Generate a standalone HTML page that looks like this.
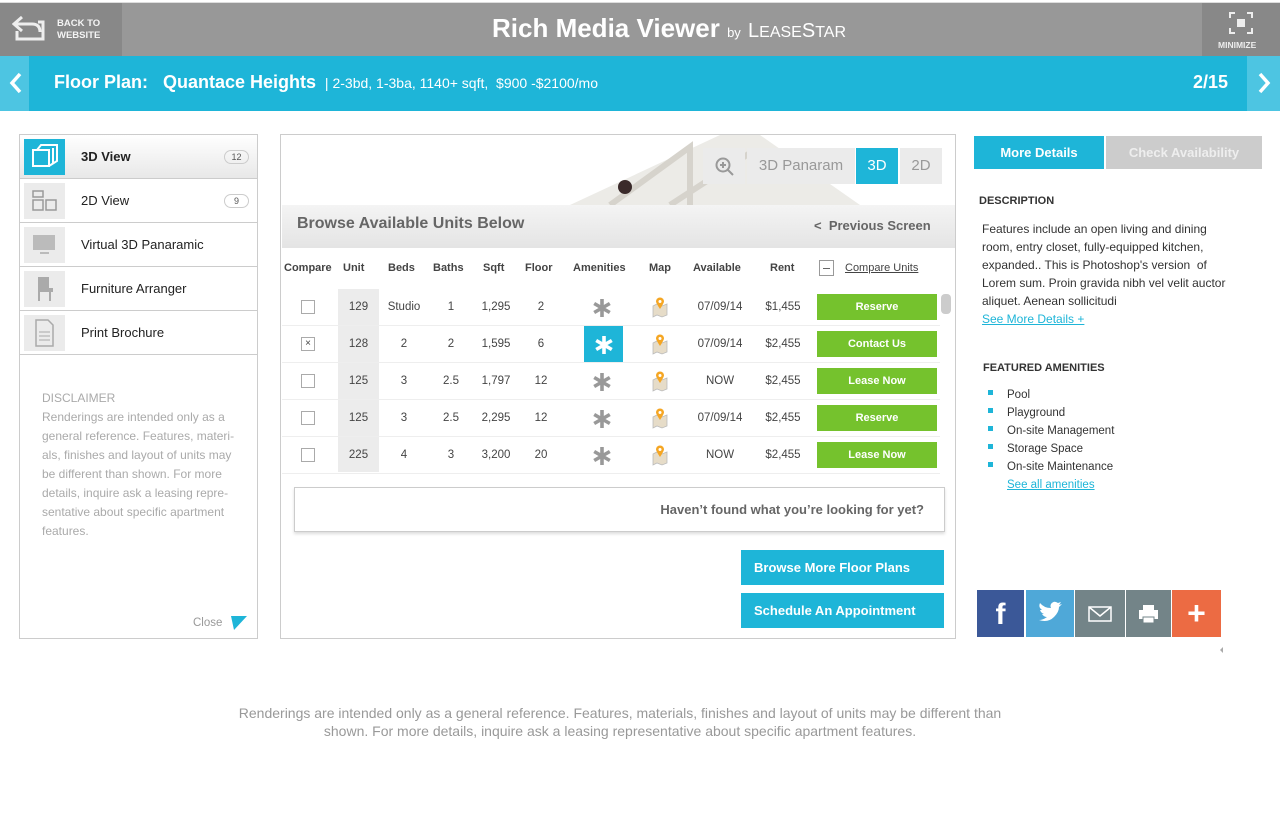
<!DOCTYPE html>
<html><head><meta charset="utf-8"><style>
*{box-sizing:border-box;margin:0;padding:0}
body{width:1280px;height:816px;background:#fff;font-family:"Liberation Sans",sans-serif;position:relative;overflow:hidden;color:#333}
.a{position:absolute}
.top{left:0;top:2px;width:1280px;height:54px;background:#989898;border-top:1px solid #ddd}
.nav{left:0;top:56px;width:1280px;height:55px;background:#1eb5d8}
.side{left:19px;top:134px;width:239px;height:505px;border:1px solid #ccc}
.item{position:absolute;left:0;width:237px;height:44px;border-bottom:1px solid #ccc;font-size:13px;color:#222}
.item .ic{position:absolute;left:4px;top:4px;width:41px;height:36px;background:#ebebeb}
.item span{position:absolute;left:61px;top:14px}
.badge{position:absolute;right:8px;top:15px;width:25px;height:14px;border:1px solid #ccc;border-radius:8px;font-size:9px;text-align:center;line-height:12px;color:#555}
.main{left:280px;top:134px;width:676px;height:505px;border:1px solid #ccc}
.th{position:absolute;top:262px;font-size:11px;font-weight:bold;color:#444;text-align:center}
.row{position:absolute;left:282px;width:658px;height:37px;border-bottom:1px solid #eee;font-size:11.5px;color:#444}
.row div{position:absolute;top:0;height:36px;line-height:36px;text-align:center}
.row .btn{left:535px;top:5px;width:120px;height:26px;line-height:26px;background:#75c22d;color:#fff;font-weight:bold;font-size:11px}
.row .cb{left:19px;top:11px;width:14px;height:14px;line-height:11px;border:1px solid #aaa;background:#fff;font-size:10px}
.row .st{left:282px;width:76px;padding-top:8px}
.row .mp{left:358px;width:42px;padding-top:8px}
.sbtn{background:#1eb5d8;color:#fff;font-weight:bold;font-size:13px;height:35px;line-height:35px;padding-left:13px}
.am{font-size:11.5px;color:#333;left:1007px}
.sq{position:absolute;left:988px;width:5px;height:5px;background:#1eb5d8}
</style></head><body>
<svg width="0" height="0" style="position:absolute"><defs>
<g id="ast"><path d="M10 1V19M2.2 5.5L17.8 14.5M2.2 14.5L17.8 5.5" stroke-width="3.6" stroke-linecap="butt"/></g>
<g id="pin"><path d="M2 9L6 7L11 9L16 7V18L11 20L6 18L2 20Z" fill="#e6dcc8" stroke="#bbb" stroke-width="0.8"/><path d="M9 12Q5 6 5 4.5A4 4 0 0 1 13 4.5Q13 6 9 12Z" fill="#f5a623"/><circle cx="9" cy="4.5" r="1.5" fill="#fff"/></g>
</defs></svg>
<div class="a top"></div>
<div class="a" style="left:0;top:3px;width:122px;height:53px;background:#888"></div>
<svg class="a" style="left:12px;top:14px" width="34" height="28" viewBox="0 0 34 28"><path d="M10 3 L2 10 L10 17 M2 10 H20 Q28 10 28 18" fill="none" stroke="#eee" stroke-width="3"/><path d="M5 17 V25 H31 V8 H26" fill="none" stroke="#eee" stroke-width="3"/></svg>
<div class="a" style="left:57px;top:18px;font-size:9.5px;font-weight:bold;color:#f4f4f4;line-height:12px">BACK TO<br>WEBSITE</div>
<div class="a" style="left:492px;top:13px;font-size:26px;font-weight:bold;color:#fff">Rich Media Viewer <span style="font-size:13px;font-weight:normal">by</span> <span style="font-size:20px;font-weight:normal">L<span style="font-size:16px">EASE</span>S<span style="font-size:16px">TAR</span></span></div>
<div class="a" style="left:1202px;top:3px;width:78px;height:53px;background:#888"></div>
<svg class="a" style="left:1229px;top:12px" width="24" height="22"><path d="M1 6V1H6 M18 1H23V6 M23 16V21H18 M6 21H1V16" fill="none" stroke="#eee" stroke-width="2"/><rect x="8" y="7" width="8" height="8" fill="#eee"/></svg>
<div class="a" style="left:1218px;top:40px;font-size:8.5px;font-weight:bold;color:#eee">MINIMIZE</div>
<div class="a nav"></div>
<div class="a" style="left:0;top:56px;width:29px;height:55px;background:#4dc5e2"></div>
<div class="a" style="left:1247px;top:56px;width:33px;height:55px;background:#4dc5e2"></div>
<svg class="a" style="left:8px;top:72px" width="16" height="22"><path d="M12 2L4 11L12 20" fill="none" stroke="#fff" stroke-width="3.5"/></svg>
<svg class="a" style="left:1256px;top:72px" width="16" height="22"><path d="M4 2L12 11L4 20" fill="none" stroke="#fff" stroke-width="3.5"/></svg>
<div class="a" style="left:54px;top:72px;color:#fff;font-size:18px;font-weight:bold">Floor Plan:&nbsp;&nbsp; Quantace Heights <span style="font-size:14px;font-weight:normal">&nbsp;| 2-3bd, 1-3ba, 1140+ sqft,&nbsp; $900 -$2100/mo</span></div>
<div class="a" style="left:1193px;top:72px;color:#fff;font-size:18px;font-weight:bold">2/15</div>

<div class="a side">
 <div class="item" style="top:0;background:linear-gradient(#fff,#e8e8e8)"><div class="ic" style="background:#1eb5d8"><svg width="41" height="36"><rect x="9" y="11" width="16" height="16" fill="none" stroke="#fff" stroke-width="2"/><path d="M13 11L17 6H33V22L25 27M29 9V25" fill="none" stroke="#fff" stroke-width="2"/></svg></div><span style="font-weight:bold">3D View</span><div class="badge">12</div></div>
 <div class="item" style="top:44px"><div class="ic"><svg width="41" height="36"><g fill="none" stroke="#999" stroke-width="1.5"><rect x="9" y="8" width="10" height="6"/><rect x="9" y="17" width="10" height="10"/><rect x="22" y="17" width="10" height="10"/></g></svg></div><span>2D View</span><div class="badge">9</div></div>
 <div class="item" style="top:88px"><div class="ic"><svg width="41" height="36"><rect x="9" y="8" width="22" height="15" fill="#bbb"/><rect x="16" y="25" width="9" height="2" fill="#bbb"/></svg></div><span>Virtual 3D Panaramic</span></div>
 <div class="item" style="top:132px"><div class="ic"><svg width="41" height="36"><path d="M13 6H25V17H29V21H27V30H25V21H16V30H14V6Z" fill="#aaa"/></svg></div><span>Furniture Arranger</span></div>
 <div class="item" style="top:176px"><div class="ic"><svg width="41" height="36"><path d="M12 5H24L29 10V31H12Z" fill="none" stroke="#aaa" stroke-width="1.5"/><path d="M15 17H26M15 21H26M15 25H26" stroke="#aaa"/></svg></div><span>Print Brochure</span></div>
 <div class="a" style="left:22px;top:254px;font-size:12px;color:#aaa;line-height:19px;width:205px">DISCLAIMER<br>Renderings are intended only as a general reference. Features, materi-als, finishes and layout of units may be different than shown. For more details, inquire ask a leasing repre-sentative about specific apartment features.</div>
 <div class="a" style="left:173px;top:482px;font-size:11.5px;color:#999">Close</div>
 <svg class="a" style="left:211px;top:481px" width="16" height="14"><path d="M0 0H16L3 14Z" fill="#1eb5d8"/></svg>
</div>

<div class="a main"></div>
<svg class="a" style="left:520px;top:135px" width="340" height="70"><path d="M50 70L200 0H240L340 70Z" fill="#ecebe7"/><path d="M90 70L170 12V70M150 70L230 18" stroke="#d6d3cc" stroke-width="6" fill="none"/><circle cx="105" cy="52" r="7" fill="#3a2a2a"/></svg>
<div class="a" style="left:703px;top:148px;width:42px;height:36px;background:#ebebeb"></div>
<svg class="a" style="left:714px;top:156px" width="22" height="22"><circle cx="9" cy="9" r="6.5" fill="none" stroke="#999" stroke-width="2"/><path d="M14 14L19 19M6 9H12M9 6V12" stroke="#999" stroke-width="2"/></svg>
<div class="a" style="left:747px;top:148px;width:108px;height:36px;background:#ebebeb;color:#999;font-size:15px;line-height:36px;text-align:center">3D Panaram</div>
<div class="a" style="left:856px;top:148px;width:42px;height:36px;background:#1eb5d8;color:#fff;font-size:15px;line-height:36px;text-align:center">3D</div>
<div class="a" style="left:900px;top:148px;width:42px;height:36px;background:#ebebeb;color:#999;font-size:15px;line-height:36px;text-align:center">2D</div>
<div class="a" style="left:282px;top:205px;width:673px;height:43px;background:linear-gradient(#f4f4f4,#e4e4e4)"></div>
<div class="a" style="left:297px;top:215px;font-size:16px;font-weight:bold;color:#666">Browse Available Units Below</div>
<div class="a" style="left:814px;top:218px;font-size:13px;font-weight:bold;color:#666">&lt;&nbsp; Previous Screen</div>
<div class="th" style="left:284px">Compare</div><div class="th" style="left:343px">Unit</div><div class="th" style="left:388px">Beds</div><div class="th" style="left:433px">Baths</div><div class="th" style="left:483px">Sqft</div><div class="th" style="left:525px">Floor</div><div class="th" style="left:573px">Amenities</div><div class="th" style="left:649px">Map</div><div class="th" style="left:693px">Available</div><div class="th" style="left:770px">Rent</div>
<div class="a" style="left:819px;top:260px;width:15px;height:16px;border:1px solid #999"><div style="margin:7px 3px;height:1px;background:#666"></div></div>
<div class="a" style="left:845px;top:262px;font-size:11px;color:#444;text-decoration:underline">Compare Units</div>
<div class="a" style="left:338px;top:289px;width:41px;height:183px;background:#ececec"></div>
<div class="a" style="left:941px;top:294px;width:10px;height:20px;background:#ccc;border-radius:4px"></div>

<div class="row" style="top:289px"><div class="cb"></div><div style="left:56px;width:41px">129</div><div style="left:98px;width:48px">Studio</div><div style="left:146px;width:46px">1</div><div style="left:192px;width:44px">1,295</div><div style="left:236px;width:46px">2</div><div class="st"><svg width="20" height="20" stroke="#999"><use href="#ast"/></svg></div><div class="mp"><svg width="20" height="22"><use href="#pin"/></svg></div><div style="left:400px;width:76px">07/09/14</div><div style="left:476px;width:50px">$1,455</div><div class="btn">Reserve</div></div>
<div class="row" style="top:326px"><div class="cb">×</div><div style="left:56px;width:41px">128</div><div style="left:98px;width:48px">2</div><div style="left:146px;width:46px">2</div><div style="left:192px;width:44px">1,595</div><div style="left:236px;width:46px">6</div><div class="st" style="left:302px;width:39px;background:#1eb5d8"><svg width="20" height="20" stroke="#fff"><use href="#ast"/></svg></div><div class="mp"><svg width="20" height="22"><use href="#pin"/></svg></div><div style="left:400px;width:76px">07/09/14</div><div style="left:476px;width:50px">$2,455</div><div class="btn">Contact Us</div></div>
<div class="row" style="top:363px"><div class="cb"></div><div style="left:56px;width:41px">125</div><div style="left:98px;width:48px">3</div><div style="left:146px;width:46px">2.5</div><div style="left:192px;width:44px">1,797</div><div style="left:236px;width:46px">12</div><div class="st"><svg width="20" height="20" stroke="#999"><use href="#ast"/></svg></div><div class="mp"><svg width="20" height="22"><use href="#pin"/></svg></div><div style="left:400px;width:76px">NOW</div><div style="left:476px;width:50px">$2,455</div><div class="btn">Lease Now</div></div>
<div class="row" style="top:400px"><div class="cb"></div><div style="left:56px;width:41px">125</div><div style="left:98px;width:48px">3</div><div style="left:146px;width:46px">2.5</div><div style="left:192px;width:44px">2,295</div><div style="left:236px;width:46px">12</div><div class="st"><svg width="20" height="20" stroke="#999"><use href="#ast"/></svg></div><div class="mp"><svg width="20" height="22"><use href="#pin"/></svg></div><div style="left:400px;width:76px">07/09/14</div><div style="left:476px;width:50px">$2,455</div><div class="btn">Reserve</div></div>
<div class="row" style="top:437px"><div class="cb"></div><div style="left:56px;width:41px">225</div><div style="left:98px;width:48px">4</div><div style="left:146px;width:46px">3</div><div style="left:192px;width:44px">3,200</div><div style="left:236px;width:46px">20</div><div class="st"><svg width="20" height="20" stroke="#999"><use href="#ast"/></svg></div><div class="mp"><svg width="20" height="22"><use href="#pin"/></svg></div><div style="left:400px;width:76px">NOW</div><div style="left:476px;width:50px">$2,455</div><div class="btn">Lease Now</div></div>

<div class="a" style="left:294px;top:487px;width:651px;height:45px;border:1px solid #ccc;box-shadow:0 2px 3px #ddd;text-align:right;padding-right:20px;line-height:43px;font-size:13px;font-weight:bold;color:#666">Haven’t found what you’re looking for yet?</div>
<div class="a sbtn" style="left:741px;top:550px;width:203px">Browse More Floor Plans</div>
<div class="a sbtn" style="left:741px;top:593px;width:203px">Schedule An Appointment</div>

<div class="a" style="left:974px;top:136px;width:130px;height:33px;background:#1eb5d8;color:#fff;font-weight:bold;font-size:13px;text-align:center;line-height:33px">More Details</div>
<div class="a" style="left:1106px;top:136px;width:156px;height:33px;background:#ccc;color:#eee;font-weight:bold;font-size:13px;text-align:center;line-height:33px">Check Availability</div>
<div class="a" style="left:979px;top:195px;font-size:11px;font-weight:bold;color:#333">DESCRIPTION</div>
<div class="a" style="left:982px;top:220px;width:250px;font-size:12px;line-height:18px;color:#333">Features include an open living and dining room, entry closet, fully-equipped kitchen, expanded.. This is Photoshop's version&nbsp; of Lorem sum. Proin gravida nibh vel velit auctor aliquet. Aenean sollicitudi<br><span style="color:#1eb5d8;text-decoration:underline">See More Details +</span></div>
<div class="a" style="left:983px;top:362px;font-size:11px;font-weight:bold;color:#333">FEATURED AMENITIES</div>
<div class="sq" style="top:390px"></div><div class="sq" style="top:408px"></div><div class="sq" style="top:426px"></div><div class="sq" style="top:444px"></div><div class="sq" style="top:462px"></div>
<div class="a am" style="top:386px;line-height:18px">Pool<br>Playground<br>On-site Management<br>Storage Space<br>On-site Maintenance<br><span style="color:#1eb5d8;text-decoration:underline">See all amenities</span></div>

<div class="a" style="left:977px;top:590px;width:47px;height:47px;background:#3b5898;color:#fff;font-size:30px;font-weight:bold;text-align:center;line-height:50px">f</div>
<div class="a" style="left:1026px;top:590px;width:48px;height:47px;background:#4fa8d8"><svg width="48" height="47"><path d="M13 30Q22 33 28 27Q33 22 33 17L36 14L33 15L35 12L32 13Q28 10 25 14Q24 16 25 18Q18 18 14 13Q12 17 16 20L14 20Q15 23 18 24L16 24Q18 27 21 27Q17 30 13 30Z" fill="#fff"/></svg></div>
<div class="a" style="left:1075px;top:590px;width:50px;height:47px;background:#738488"><svg width="50" height="47"><rect x="14" y="17" width="22" height="14" fill="none" stroke="#fff" stroke-width="1.5"/><path d="M14 17L25 26L36 17" fill="none" stroke="#fff" stroke-width="1.5"/></svg></div>
<div class="a" style="left:1126px;top:590px;width:45px;height:47px;background:#738488"><svg width="45" height="47"><rect x="17" y="15" width="11" height="5" fill="#fff"/><rect x="13" y="20" width="19" height="9" fill="#fff"/><rect x="17" y="27" width="11" height="6" fill="#fff" stroke="#738488"/></svg></div>
<div class="a" style="left:1172px;top:590px;width:49px;height:47px;background:#ec6b43;color:#fff;font-size:32px;font-weight:bold;text-align:center;line-height:47px">+</div>
<div class="a" style="left:1217px;top:647px;width:0;height:0;border:3px solid transparent;border-right-color:#aaa"></div>

<div class="a" style="left:220px;top:704px;width:800px;text-align:center;font-size:14px;line-height:18px;color:#999">Renderings are intended only as a general reference. Features, materials, finishes and layout of units may be different than shown. For more details, inquire ask a leasing representative about specific apartment features.</div>
</body></html>
